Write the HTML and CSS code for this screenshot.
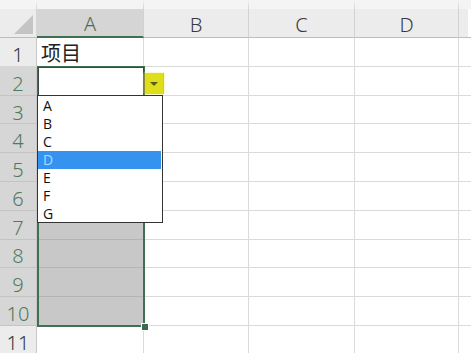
FILE: index.html
```html
<!DOCTYPE html>
<html lang="zh">
<head>
  <meta charset="UTF-8">
  <title>数据验证下拉列表</title>
  <link rel="stylesheet" href="styles.css">
</head>
<body>

  <div class="sheet">
    <!-- header row -->
    <div class="corner"><span class="tri"></span></div>
    <div class="col-head active">A</div>
    <div class="col-head">B</div>
    <div class="col-head">C</div>
    <div class="col-head">D</div>
    <div class="col-head last"></div>

    <!-- row 1 -->
    <div class="row-head">1</div>
    <div class="cell text">项目</div>
    <div class="cell"></div><div class="cell"></div><div class="cell"></div><div class="cell last"></div>

    <div class="row-head on">2</div>
    <div class="cell"></div>
    <div class="cell"></div><div class="cell"></div><div class="cell"></div><div class="cell last"></div>

    <div class="row-head on">3</div>
    <div class="cell sel"></div>
    <div class="cell"></div><div class="cell"></div><div class="cell"></div><div class="cell last"></div>

    <div class="row-head on">4</div>
    <div class="cell sel"></div>
    <div class="cell"></div><div class="cell"></div><div class="cell"></div><div class="cell last"></div>

    <div class="row-head on">5</div>
    <div class="cell sel"></div>
    <div class="cell"></div><div class="cell"></div><div class="cell"></div><div class="cell last"></div>

    <div class="row-head on">6</div>
    <div class="cell sel"></div>
    <div class="cell"></div><div class="cell"></div><div class="cell"></div><div class="cell last"></div>

    <div class="row-head on">7</div>
    <div class="cell sel"></div>
    <div class="cell"></div><div class="cell"></div><div class="cell"></div><div class="cell last"></div>

    <div class="row-head on">8</div>
    <div class="cell sel"></div>
    <div class="cell"></div><div class="cell"></div><div class="cell"></div><div class="cell last"></div>

    <div class="row-head on">9</div>
    <div class="cell sel"></div>
    <div class="cell"></div><div class="cell"></div><div class="cell"></div><div class="cell last"></div>

    <div class="row-head on">10</div>
    <div class="cell sel"></div>
    <div class="cell"></div><div class="cell"></div><div class="cell"></div><div class="cell last"></div>

    <div class="row-head">11</div>
    <div class="cell"></div>
    <div class="cell"></div><div class="cell"></div><div class="cell"></div><div class="cell last"></div>

    <!-- selection A2:A10 -->
    <div class="selection"></div>
    <div class="active-cell"></div>
    <div class="handle"></div>

    <!-- validation dropdown -->
    <div class="drop-btn"><span class="arrow"></span></div>
    <ul class="drop-list">
      <li>A</li>
      <li>B</li>
      <li>C</li>
      <li class="hover">D</li>
      <li>E</li>
      <li>F</li>
      <li>G</li>
    </ul>
  </div>

</body>
</html>
```

FILE: styles.css
```css
body {
  margin: 0;
  background: #fff;
  font-family: 'Noto Sans', 'Noto Sans CJK SC', sans-serif;
  color: #333;
  overflow: hidden;
}

.sheet {
  position: relative;
  display: grid;
  grid-template-columns: 37px 107px 105px 106px 104px 12px;
  grid-template-rows: 38px repeat(11, 28.8px);
  width: 471px;
}

.corner {
  position: relative;
  background: #ececec;
  border-top: 9px solid #f4f4f4;
  border-right: 1px solid #d6d6d6;
  border-bottom: 1px solid #bdbdbd;
  box-sizing: border-box;
}

.tri {
  position: absolute;
  right: 3px;
  bottom: 3px;
  width: 0;
  height: 0;
  border-left: 19px solid transparent;
  border-bottom: 19px solid #c4c4c4;
}

.col-head {
  background: #ececec;
  border-top: 9px solid #f4f4f4;
  border-right: 1px solid #d2d2d2;
  border-bottom: 1px solid #bdbdbd;
  box-sizing: border-box;
  display: flex;
  align-items: center;
  justify-content: center;
  font-size: 20px;
  font-weight: 300;
  color: #3a3a3a;
  padding-top: 2px;
}

.col-head.active {
  background: #d5d5d5;
  color: #4b6a56;
  border-bottom: 2px solid #3f7052;
}

.col-head.last {
  border-right: 0;
  background: linear-gradient(to right, #ececec 9px, #fff 9px);
}

.row-head {
  background: #ececec;
  border-right: 1px solid #c8c8c8;
  border-bottom: 1px solid #d6d6d6;
  box-sizing: border-box;
  display: flex;
  align-items: center;
  justify-content: center;
  font-size: 20px;
  font-weight: 300;
  color: #3a3a3a;
  padding-top: 5px;
}

.row-head.on {
  background: #d6d6d6;
  color: #4f7a5e;
  border-bottom-color: #c4c4c4;
}

.cell {
  border-right: 1px solid #dadada;
  border-bottom: 1px solid #dadada;
  box-sizing: border-box;
}

.cell.last {
  border-right: 0;
}

.cell.sel {
  background: #c8c8c8;
  border-bottom-color: #b4b4b4;
}

.cell.text {
  font-size: 20px;
  color: #222;
  padding: 3px 0 0 4px;
  line-height: 26px;
}

.selection {
  position: absolute;
  left: 37px;
  top: 66px;
  width: 108px;
  height: 261px;
  border: 2px solid #3f7052;
  box-sizing: border-box;
  pointer-events: none;
}

.active-cell {
  position: absolute;
  left: 38px;
  top: 67px;
  width: 106px;
  height: 29px;
  border: 1px solid #3b4a40;
  box-sizing: border-box;
}

.handle {
  position: absolute;
  left: 141px;
  top: 323px;
  width: 6px;
  height: 6px;
  background: #3b6a4e;
  border: 1px solid #fff;
}

.drop-btn {
  position: absolute;
  left: 144px;
  top: 73px;
  width: 20px;
  height: 21px;
  background: #dede1a;
  border-left: 1px solid #8c8c3a;
  border-right: 1px solid #c9c95a;
  box-sizing: border-box;
  box-shadow: 0 0 2px #f0f070;
  display: flex;
  align-items: center;
  justify-content: center;
}

.arrow {
  width: 0;
  height: 0;
  border-left: 4px solid transparent;
  border-right: 4px solid transparent;
  border-top: 4px solid #5a5a20;
  margin-top: 1px;
}

.drop-list {
  position: absolute;
  left: 37px;
  top: 95px;
  width: 126px;
  height: 128px;
  margin: 0;
  padding: 1px 0 0;
  list-style: none;
  background: #fff;
  border: 1px solid #333;
  box-sizing: border-box;
}

.drop-list li {
  height: 18px;
  line-height: 18px;
  padding-left: 5px;
  margin-right: 1px;
  font-family: 'Open Sans', sans-serif;
  font-size: 14px;
  color: #111;
}

.drop-list li.hover {
  background: #3592ee;
  color: #a8dcff;
}
```
